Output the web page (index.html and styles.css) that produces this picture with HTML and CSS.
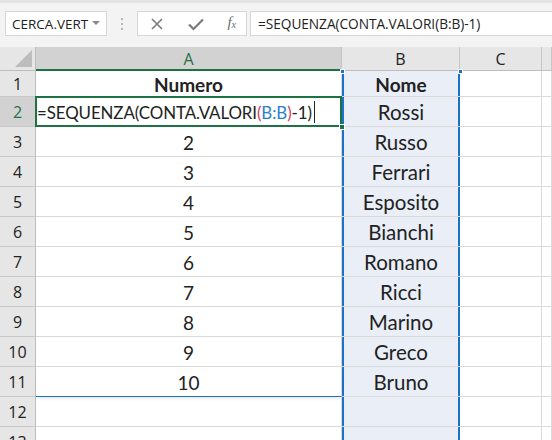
FILE: index.html
```html
<!DOCTYPE html>
<html lang="it">
<head>
<meta charset="utf-8">
<link rel="stylesheet" href="styles.css">
</head>
<body>
<div class="app">
  <div class="toolbar">
    <div class="namebox"><span>CERCA.VERT</span><span class="caret"></span></div>
    <div class="grip"><i></i><i></i><i></i></div>
    <div class="fbtns">
      <svg class="ic" width="16" height="16" viewBox="0 0 16 16"><path d="M3 3 L13 13 M13 3 L3 13" stroke="#7a7a7a" stroke-width="1.6" fill="none"/></svg>
      <svg class="ic" width="18" height="16" viewBox="0 0 18 16"><path d="M2 8.5 L6.5 13 L16 3.5" stroke="#7a7a7a" stroke-width="2.2" fill="none"/></svg>
      <span class="fx">f<sub>x</sub></span>
    </div>
    <div class="fbar">=SEQUENZA(CONTA.VALORI(B:B)-1)</div>
  </div>
  <div class="sheet">
    <div class="c corner"><span class="tri"></span></div>
    <div class="c ch sel">A</div>
    <div class="c ch">B</div>
    <div class="c ch">C</div>
    <div class="c ch"></div>

    <div class="c rh r1">1</div>
    <div class="c ca r1 b">Numero</div>
    <div class="c cb r1 b">Nome<span class="hdl hl"></span><span class="hdl hr"></span></div>
    <div class="c r1"></div>
    <div class="c r1"></div>

    <div class="c rh rsel">2</div>
    <div class="c ca active"><span class="ftext">=SEQUENZA(CONTA.VALORI<span class="pr">(</span><span class="rf">B:B</span><span class="pr">)</span>-1)</span><span class="cursor"></span><span class="abox"></span><span class="fill"></span></div>
    <div class="c cb">Rossi</div>
    <div class="c"></div>
    <div class="c"></div>

    <div class="c rh">3</div>
    <div class="c ca">2</div>
    <div class="c cb">Russo</div>
    <div class="c"></div>
    <div class="c"></div>

    <div class="c rh">4</div>
    <div class="c ca">3</div>
    <div class="c cb">Ferrari</div>
    <div class="c"></div>
    <div class="c"></div>

    <div class="c rh">5</div>
    <div class="c ca">4</div>
    <div class="c cb">Esposito</div>
    <div class="c"></div>
    <div class="c"></div>

    <div class="c rh">6</div>
    <div class="c ca">5</div>
    <div class="c cb">Bianchi</div>
    <div class="c"></div>
    <div class="c"></div>

    <div class="c rh">7</div>
    <div class="c ca">6</div>
    <div class="c cb">Romano</div>
    <div class="c"></div>
    <div class="c"></div>

    <div class="c rh">8</div>
    <div class="c ca">7</div>
    <div class="c cb">Ricci</div>
    <div class="c"></div>
    <div class="c"></div>

    <div class="c rh">9</div>
    <div class="c ca">8</div>
    <div class="c cb">Marino</div>
    <div class="c"></div>
    <div class="c"></div>

    <div class="c rh">10</div>
    <div class="c ca">9</div>
    <div class="c cb">Greco</div>
    <div class="c"></div>
    <div class="c"></div>

    <div class="c rh">11</div>
    <div class="c ca spill">10</div>
    <div class="c cb">Bruno</div>
    <div class="c"></div>
    <div class="c"></div>

    <div class="c rh">12</div>
    <div class="c ca"></div>
    <div class="c cb"></div>
    <div class="c"></div>
    <div class="c"></div>

    <div class="c rh">13</div>
    <div class="c ca"></div>
    <div class="c cb"></div>
    <div class="c"></div>
    <div class="c"></div>
  </div>
</div>
</body>
</html>
```
FILE: styles.css
```css
* { box-sizing: border-box; }
html, body { margin: 0; padding: 0; }
body { width: 552px; height: 440px; overflow: hidden; background: #fff; }
.app { width: 552px; height: 440px; overflow: hidden; }

.toolbar {
  height: 47px;
  background: #f3f3f3;
  border-top: 3px solid #e4e4e4;
  display: flex;
  align-items: flex-start;
  padding: 8px 0 0 5px;
  font-family: "Open Sans", "Noto Sans", sans-serif;
  font-size: 13.5px;
  color: #222;
}
.namebox {
  width: 102px;
  height: 25px;
  background: #fff;
  border: 1px solid #d6d6d6;
  display: flex;
  align-items: center;
  justify-content: space-between;
  padding: 0 6px 0 6px;
}
.caret {
  width: 0; height: 0;
  border-left: 4px solid transparent;
  border-right: 4px solid transparent;
  border-top: 4px solid #8a8a8a;
  margin-top: -2px;
}
.grip {
  width: 30px;
  height: 25px;
  display: flex;
  flex-direction: column;
  align-items: center;
  justify-content: center;
  gap: 3px;
}
.grip i { display: block; width: 2px; height: 2px; background: #b5b5b5; }
.fbtns {
  width: 110px;
  height: 25px;
  background: #fff;
  border: 1px solid #d6d6d6;
  display: flex;
  align-items: center;
  justify-content: space-between;
  padding: 0 10px 0 11px;
}
.fx {
  font-family: "Liberation Serif", serif;
  font-style: italic;
  color: #6e6e6e;
  font-size: 15px;
  line-height: 1;
  margin-top: -3px;
}
.fx sub { font-size: 10px; vertical-align: -1px; }
.fbar {
  flex: 1;
  height: 25px;
  margin-left: 3px;
  background: #fff;
  border: 1px solid #d6d6d6;
  border-right: none;
  display: flex;
  align-items: center;
  padding-left: 7px;
  font-size: 13.7px;
  letter-spacing: -0.05px;
}

.sheet {
  display: grid;
  grid-template-columns: 36px 306px 118px 82px 1fr;
  grid-template-rows: 24px 26px repeat(12, 30px);
  font-family: "Lato", "Open Sans", sans-serif;
  font-size: 20.5px;
  color: #222;
}
.c {
  border-right: 1px solid #dadada;
  border-bottom: 1px solid #dadada;
  display: flex;
  align-items: center;
  justify-content: center;
  position: relative;
  padding-top: 1px;
}
.corner { background: #e6e6e6; border-right: 1px solid #bdbdbd; border-bottom: 1px solid #bdbdbd; }
.tri {
  position: absolute;
  right: 3px; bottom: 3px;
  width: 0; height: 0;
  border-left: 17px solid transparent;
  border-bottom: 17px solid #bdbdbd;
}
.ch {
  background: #e6e6e6;
  border-right: 1px solid #c6c6c6;
  border-bottom: 1px solid #bdbdbd;
  font-family: "Open Sans", "Noto Sans", sans-serif;
  font-size: 16px;
  color: #222;
}
.ch.sel {
  background: #d2d2d2;
  color: #1e7145;
  border-bottom: 2px solid #1e7145;
}
.rh {
  background: #e6e6e6;
  border-right: 1px solid #bdbdbd;
  border-bottom: 1px solid #c9c9c9;
  font-family: "Open Sans", "Noto Sans", sans-serif;
  font-size: 16px;
  color: #222;
}
.rh.rsel { background: #d2d2d2; color: #1e7145; }
.ca { font-size: 19px; }
.b { font-weight: bold; font-size: 19px; }

.cb {
  background: #e9eef7;
  border-right: none;
  box-shadow: inset 2px 0 0 #1a73c8, inset -2px 0 0 #1a73c8;
}
.hdl {
  position: absolute;
  top: -2px;
  width: 5px; height: 5px;
  background: #1a73c8;
  border: 1px solid #fff;
}
.hl { left: -2px; }
.hr { right: -3px; }

.active { justify-content: flex-start; padding-left: 1px; overflow: visible; }
.ftext { white-space: nowrap; font-size: 16.9px; letter-spacing: -0.1px; position: relative; z-index: 2; }
.pr { color: #d33b5b; }
.rf { color: #2a7fd0; }
.cursor { display: inline-block; width: 1px; height: 22px; background: #222; margin-left: 2px; position: relative; z-index: 2; }
.abox {
  position: absolute;
  left: -1px; top: -1px; right: -1px; bottom: -1px;
  border: 2px solid #1e7145;
  z-index: 3;
  pointer-events: none;
}
.fill {
  position: absolute;
  right: -4px; bottom: -4px;
  width: 6px; height: 6px;
  background: #1e7145;
  border: 1px solid #fff;
  z-index: 4;
}
.spill { border-bottom: 1px solid #1a73c8; box-shadow: 0 3px 4px -2px rgba(0,0,0,0.12); z-index: 1; }
```
